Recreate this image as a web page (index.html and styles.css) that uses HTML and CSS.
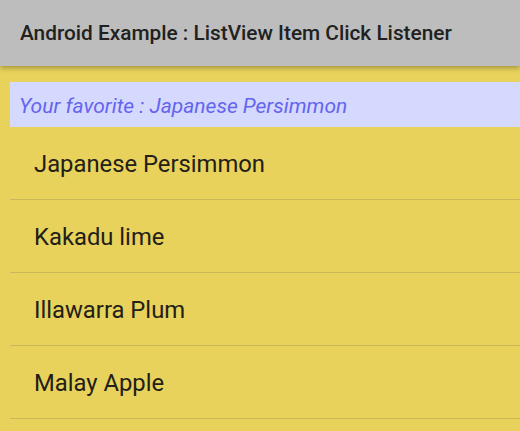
FILE: index.html
```html
<!DOCTYPE html>
<html>
<head>
  <title>ListView Item Click Listener</title>
  <link rel="stylesheet" href="styles.css">
</head>
<body>
  <header class="toolbar">
    <h1>Android Example : ListView Item Click Listener</h1>
  </header>

  <main class="content">
    <p class="favorite">Your favorite : Japanese Persimmon</p>
    <ul class="fruit-list">
      <li>Japanese Persimmon</li>
      <li>Kakadu lime</li>
      <li>Illawarra Plum</li>
      <li>Malay Apple</li>
    </ul>
  </main>
</body>
</html>
```
FILE: styles.css
```css
html, body {
  height: 100%;
}

body {
  font-family: Roboto, "Noto Sans", sans-serif;
  margin: 0;
  padding: 0;
  background-color: #e8d25b;
  overflow: hidden;
}

.toolbar {
  position: relative;
  height: 66px;
  background-color: #bdbdbd;
  display: flex;
  align-items: center;
  padding: 0 20px;
  box-shadow: 0 2px 5px rgba(0, 0, 0, 0.3);
}

.toolbar h1 {
  margin: 0;
  font-size: 20.8px;
  font-weight: 500;
  color: #212121;
}

.content {
  padding: 16px 0 0 10px;
}

.favorite {
  box-sizing: border-box;
  margin: 0;
  height: 45px;
  display: flex;
  align-items: center;
  padding: 2px 0 0 9px;
  background-color: #d4d9fd;
  color: #6464f0;
  font-size: 21px;
  font-style: italic;
}

.fruit-list {
  list-style: none;
  margin: 0;
  padding: 0;
}

.fruit-list li {
  box-sizing: border-box;
  height: 73px;
  display: flex;
  align-items: center;
  padding: 2px 0 0 24px;
  border-bottom: 1px solid #c9b75a;
  font-size: 23.8px;
  color: #222018;
}
```
